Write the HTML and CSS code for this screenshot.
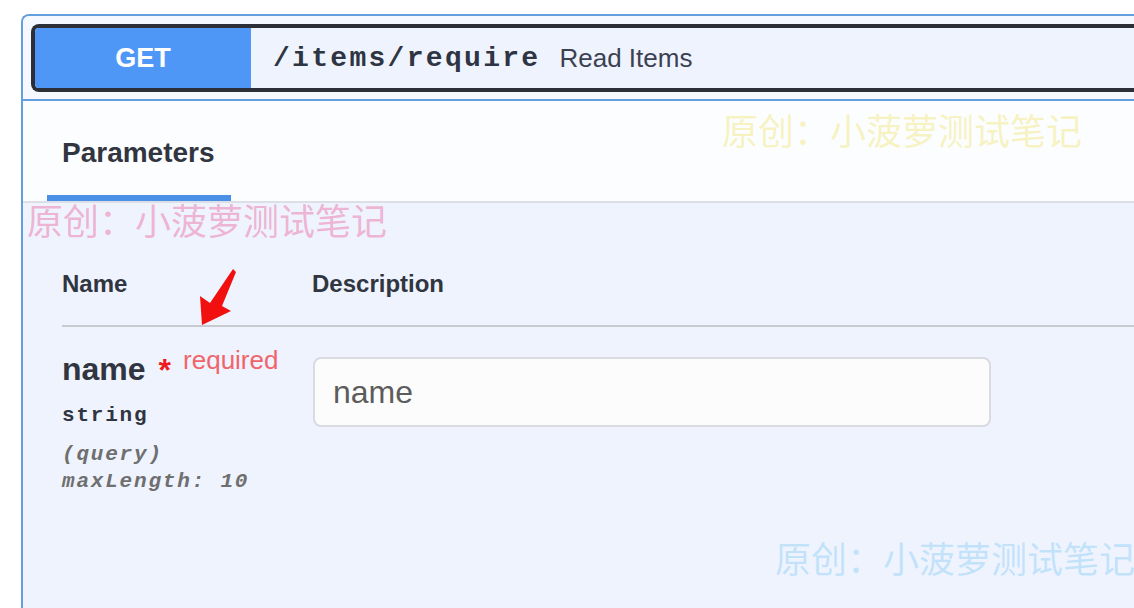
FILE: index.html
```html
<!DOCTYPE html>
<html lang="zh-CN">
<head>
<meta charset="utf-8">
<title>Read Items</title>
<link rel="stylesheet" href="styles.css">
</head>
<body>
<div class="page">
  <div class="card">
    <div class="summary">
      <div class="summary-box">
        <span class="method">GET</span>
        <span class="path">/items/require</span>
        <span class="desc">Read Items</span>
      </div>
    </div>
    <div class="section-header">
      <div class="tab"><h4 class="tab-title">Parameters</h4></div>
    </div>
    <div class="section-body">
      <div class="thead">
        <div class="col-name">Name</div>
        <div class="col-desc">Description</div>
      </div>
      <div class="row">
        <div class="col-name cell-name">
          <div class="param-name">name<span class="star">*</span><span class="req">required</span></div>
          <div class="param-type">string</div>
          <div class="param-in first">(query)</div>
          <div class="param-in">maxLength: 10</div>
        </div>
        <div class="col-desc cell-desc">
          <input class="field" type="text" placeholder="name">
        </div>
      </div>
    </div>
  </div>

  <div class="wm wm-yellow">原创：小菠萝测试笔记</div>
  <div class="wm wm-pink">原创：小菠萝测试笔记</div>
  <div class="wm wm-blue">原创：小菠萝测试笔记</div>

  <svg class="arrow" width="50" height="70" viewBox="195 265 50 70" xmlns="http://www.w3.org/2000/svg">
    <polygon points="233,269 236,272 222,306 231,311 202,325 200,296 210,303" fill="#f20f0f"/>
  </svg>
</div>
</body>
</html>
```

FILE: styles.css
```css
body {
  margin: 0;
  background: #ffffff;
  font-family: "Liberation Sans", Arial, sans-serif;
}

.page {
  position: relative;
  width: 1134px;
  height: 608px;
  overflow: hidden;
}

.card {
  margin: 14px 0 0 21px;
  width: 1180px;
  min-height: 640px;
  border: 2px solid #639fdc;
  border-right: none;
  border-bottom: none;
  border-radius: 8px 0 0 0;
  background: #eef3fe;
}

.summary {
  padding: 8px 0 7px 8px;
  border-bottom: 2px solid #639fdc;
  background: #f5f8fe;
  border-radius: 6px 0 0 0;
}

.summary-box {
  display: flex;
  align-items: center;
  height: 60px;
  border: 4px solid #2c2f38;
  border-right: none;
  border-radius: 8px 0 0 8px;
  background: #eef3fe;
}

.method {
  align-self: stretch;
  width: 216px;
  display: flex;
  align-items: center;
  justify-content: center;
  background: #4f97f7;
  color: #ffffff;
  font-weight: 700;
  font-size: 27px;
  border-radius: 4px 0 0 4px;
}

.path {
  margin-left: 22px;
  font-family: "Liberation Mono", "Courier New", monospace;
  font-weight: 700;
  font-size: 28px;
  letter-spacing: 2.3px;
  color: #2f3442;
}

.desc {
  margin-left: 19px;
  font-size: 26px;
  color: #3b4151;
}

.section-header {
  padding-left: 24px;
  background: #fcfdff;
  border-bottom: 2px solid #dcdfe5;
}

.tab {
  display: inline-block;
  padding: 36px 16px 26px 15px;
  border-bottom: 6px solid #4a90e8;
}

.tab-title {
  margin: 0;
  font-size: 28px;
  line-height: 32px;
  font-weight: 700;
  color: #303540;
}

.section-body {
  padding-left: 39px;
}

.thead {
  display: flex;
  padding-top: 67px;
  padding-bottom: 27px;
  border-bottom: 2px solid #c7cad1;
  font-size: 24px;
  line-height: 28px;
  font-weight: 700;
  color: #303540;
}

.col-name {
  width: 250px;
  flex: none;
}

.row {
  display: flex;
}

.cell-name {
  padding-top: 23px;
}

.param-name {
  font-size: 32px;
  line-height: 36px;
  font-weight: 700;
  color: #303540;
}

.star {
  padding-left: 13px;
  color: #ee1c1c;
  vertical-align: -1px;
}

.req {
  font-size: 26px;
  line-height: 20px;
  font-weight: 400;
  color: #f0656b;
  vertical-align: 11px;
  padding-left: 12px;
}

.param-type {
  margin-top: 14px;
  font-family: "Liberation Mono", "Courier New", monospace;
  font-size: 21px;
  letter-spacing: 1.8px;
  line-height: 28px;
  font-weight: 700;
  color: #2f3442;
}

.param-in {
  font-family: "Liberation Mono", "Courier New", monospace;
  font-size: 21px;
  letter-spacing: 1.8px;
  line-height: 27px;
  font-weight: 700;
  font-style: italic;
  color: #6f6f6f;
}

.param-in.first {
  margin-top: 11px;
}

.cell-desc {
  padding-top: 30px;
}

.field {
  display: block;
  box-sizing: border-box;
  width: 678px;
  height: 70px;
  margin: 0 0 0 1px;
  padding: 0 18px;
  border: 2px solid #d9dbe1;
  border-radius: 8px;
  background: #fcfcfc;
  font-family: "Liberation Sans", Arial, sans-serif;
  font-size: 32px;
  color: #5c5c5c;
  outline: none;
}

.field::placeholder {
  color: #5c5c5c;
  opacity: 1;
}

.wm {
  position: absolute;
  font-family: "Noto Sans CJK SC", "Noto Sans", sans-serif;
  font-size: 36px;
  line-height: 36px;
  white-space: nowrap;
  pointer-events: none;
}

.wm-yellow {
  left: 722px;
  top: 111px;
  color: rgba(238, 226, 90, 0.38);
}

.wm-pink {
  left: 27px;
  top: 201px;
  color: rgba(236, 90, 150, 0.42);
}

.wm-blue {
  left: 775px;
  top: 539px;
  color: rgba(110, 195, 245, 0.35);
}

.arrow {
  position: absolute;
  left: 195px;
  top: 265px;
}
```
